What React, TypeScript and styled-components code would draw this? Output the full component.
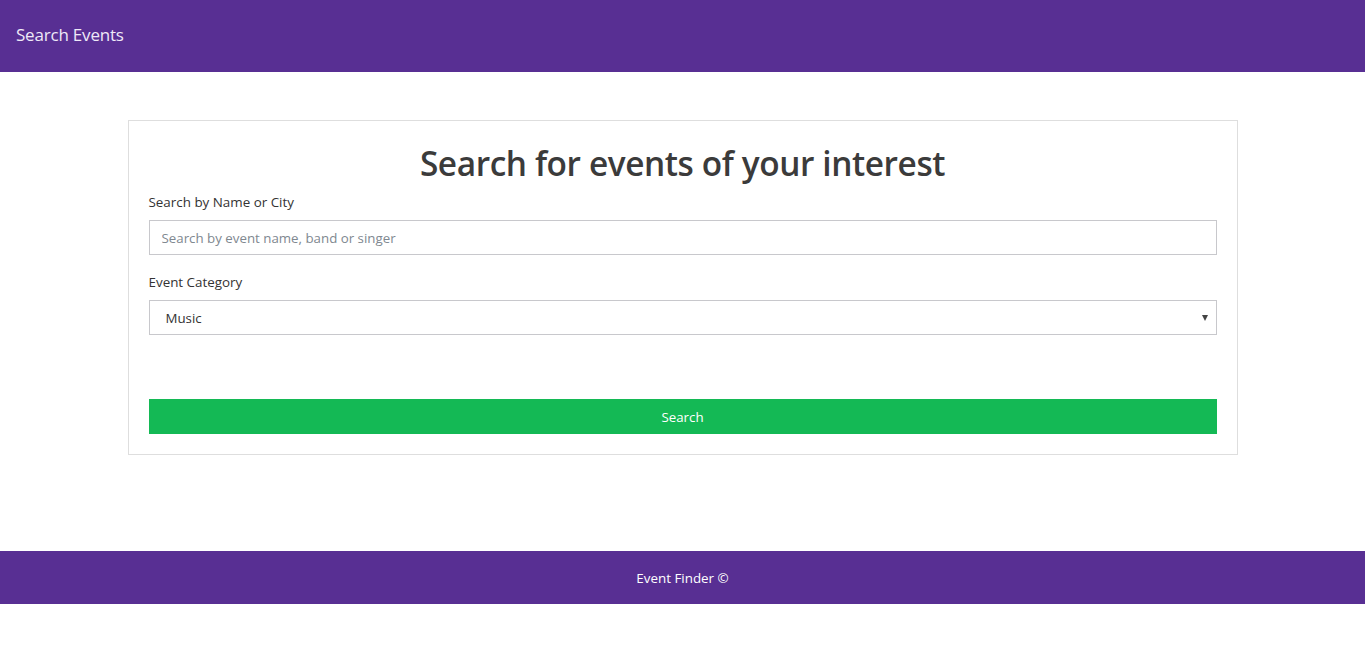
import React from "react";
import styled, { createGlobalStyle } from "styled-components";

const Global = createGlobalStyle`
  html, body { margin: 0; padding: 0; background: #fff; }
  body { font-family: "Open Sans", "Noto Sans", sans-serif; color: #333; }
  * { box-sizing: border-box; }
`;

const Header = styled.header`
  height: 72px;
  background: #582f93;
  display: flex;
  align-items: center;
  padding: 0 16px 4px;
`;

const Brand = styled.div`
  color: #efe9f8;
  font-size: 17px;
  letter-spacing: -0.2px;
`;

const Main = styled.main`
  padding: 48px 0 96px;
`;

const Container = styled.div`
  width: 1110px;
  margin: 0 auto;
`;

const Card = styled.section`
  border: 1px solid #dedede;
  padding: 20px 20px 20px;
`;

const Title = styled.h1`
  margin: 0 0 7px;
  text-align: center;
  font-size: 33.4px;
  font-weight: 600;
  line-height: 44px;
  color: #3b3b3b;
  letter-spacing: -0.4px;
`;

const Group = styled.div<{ $mb: number }>`
  display: flex;
  flex-direction: column;
  margin-bottom: ${(p) => p.$mb}px;
`;

const Label = styled.label`
  font-size: 13.4px;
  line-height: 20px;
  color: #333;
  margin-bottom: 8px;
`;

const Input = styled.input`
  height: 35px;
  border: 1px solid #c8c8cc;
  padding: 0 12px;
  font-family: inherit;
  font-size: 13.3px;
  color: #333;
  outline: none;
  &::placeholder { color: #808890; }
`;

const SelectBox = styled.div`
  position: relative;
  height: 35px;
  border: 1px solid #c8c8cc;
  display: flex;
  align-items: center;
  padding: 0 16px;
  font-size: 13.3px;
  color: #333;
`;

const Arrow = styled.span`
  position: absolute;
  right: 8px;
  top: 50%;
  transform: translateY(-50%);
  width: 0;
  height: 0;
  border-left: 3.5px solid transparent;
  border-right: 3.5px solid transparent;
  border-top: 6px solid #444;
`;

const Button = styled.button`
  width: 100%;
  height: 35px;
  border: none;
  background: #14b955;
  color: #fff;
  font-family: inherit;
  font-size: 13.3px;
  cursor: pointer;
`;

const Footer = styled.footer`
  height: 53px;
  background: #582f93;
  display: flex;
  align-items: center;
  justify-content: center;
  color: #fff;
  font-size: 13.4px;
`;

export default function App() {
  return (
    <>
      <Global />
      <Header>
        <Brand>Search Events</Brand>
      </Header>
      <Main>
        <Container>
          <Card>
            <Title>Search for events of your interest</Title>
            <Group $mb={17}>
              <Label>Search by Name or City</Label>
              <Input placeholder="Search by event name, band or singer" />
            </Group>
            <Group $mb={64}>
              <Label>Event Category</Label>
              <SelectBox>
                Music
                <Arrow />
              </SelectBox>
            </Group>
            <Button>Search</Button>
          </Card>
        </Container>
      </Main>
      <Footer>Event Finder ©</Footer>
    </>
  );
}
